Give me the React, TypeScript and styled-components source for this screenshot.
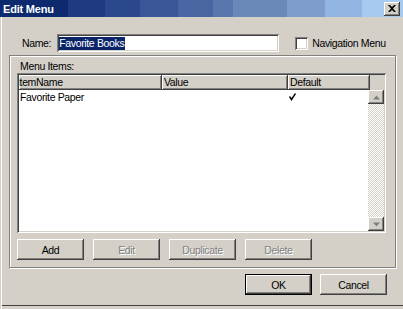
import * as React from 'react'
import styled, { createGlobalStyle } from 'styled-components'

const GlobalStyle = createGlobalStyle`
    html, body {
        margin: 0;
        padding: 0;
        background: #d4d0c8;
    }
    body {
        font: 10.5px 'Liberation Sans', Arial, sans-serif;
        letter-spacing: -0.35px;
        color: #000;
    }
`

const face = '#d4d0c8'
const shadow = '#808080'
const darkShadow = '#404040'

// Raised bevel used by buttons and header cells
const raised = `
    box-shadow: inset -1px -1px 0 ${darkShadow}, inset 1px 1px 0 #fff,
        inset -2px -2px 0 ${shadow}, inset 2px 2px 0 ${face};
`

// Sunken bevel used by edit fields, checkbox and list
const sunken = `
    box-shadow: inset 1px 1px 0 ${shadow}, inset -1px -1px 0 #fff,
        inset 2px 2px 0 ${darkShadow}, inset -2px -2px 0 ${face};
`

const Window = styled.div`
    width: 403px;
    height: 309px;
    display: flex;
    flex-direction: column;
    background: ${face};
    overflow: hidden;
`

const TitleBar = styled.div`
    height: 17px;
    flex-shrink: 0;
    display: flex;
    align-items: center;
    padding: 0 3px 0 3px;
    background: linear-gradient(
        to right,
        #0e2a6e 0 68px,
        #1f3a80 68px 105px,
        #2c488c 105px 140px,
        #3a5696 140px 178px,
        #4a66a2 178px 213px,
        #5a76ae 213px 233px,
        #6a88b8 233px 287px,
        #7e9ccc 287px 325px,
        #92b4e0 325px 362px,
        #a6caf0 362px
    );
`

const Title = styled.div`
    flex: 1;
    color: #fff;
    font-weight: bold;
    font-size: 11px;
    letter-spacing: -0.2px;
`

const CloseBtn = styled.div`
    width: 16px;
    height: 14px;
    background: ${face};
    ${raised}
    display: flex;
    align-items: center;
    justify-content: center;
`

const Body = styled.div`
    flex: 1;
    display: flex;
    flex-direction: column;
    padding: 0 7px 0 9px;
    box-shadow: inset 1px 0 0 ${face}, inset 2px 0 0 #fff,
        inset 0 -3px 0 ${face}, inset 0 -4px 0 ${darkShadow};
`

const NameRow = styled.div`
    display: flex;
    align-items: center;
    height: 18px;
    margin-top: 17px;
    padding-left: 13px;
`

const Label = styled.span`
    white-space: nowrap;
`

const TextField = styled.div`
    width: 222px;
    height: 18px;
    margin-left: 6px;
    background: #fff;
    ${sunken}
    display: flex;
    align-items: center;
    padding: 0 2px;
    box-sizing: border-box;
`

const Selected = styled.span`
    background: #0a246a;
    color: #fff;
    line-height: 13px;
    padding-right: 1px;
`

const CheckBox = styled.div`
    width: 13px;
    height: 13px;
    margin-left: 16px;
    margin-right: 4px;
    background: #fff;
    ${sunken}
`

const GroupBox = styled.div`
    margin-top: 3px;
    height: 208px;
    border: 1px solid ${shadow};
    box-shadow: inset 1px 1px 0 #fff, 1px 1px 0 #fff;
    display: flex;
    flex-direction: column;
    padding: 3px 9px 0 7px;
`

const GroupLabel = styled.div`
    line-height: 14px;
    padding-left: 3px;
`

const List = styled.div`
    height: 160px;
    width: 369px;
    box-sizing: border-box;
    padding: 2px;
    background: #fff;
    ${sunken}
    display: flex;
    flex-direction: column;
`

const HeaderRow = styled.div`
    display: flex;
    height: 15px;
    flex-shrink: 0;
    background: ${face};
`

const HeaderCell = styled.div<{ $w: number }>`
    width: ${p => p.$w}px;
    flex-shrink: 0;
    box-sizing: border-box;
    padding-left: 2px;
    line-height: 15px;
    overflow: hidden;
    white-space: nowrap;
    box-shadow: inset -1px -1px 0 ${darkShadow}, inset 1px 1px 0 #fff,
        inset -2px -2px 0 ${shadow};
`

// the first header label is partly scrolled out of view in the original
const Clip = styled.span`
    display: inline-block;
    margin-left: -4px;
`

const ListBody = styled.div`
    flex: 1;
    display: flex;
    min-height: 0;
`

const Rows = styled.div`
    flex: 1;
    overflow: hidden;
`

const Row = styled.div`
    display: flex;
    height: 13px;
    align-items: center;
`

const Cell = styled.div<{ $w: number }>`
    width: ${p => p.$w}px;
    flex-shrink: 0;
    overflow: hidden;
    white-space: nowrap;
    padding-left: 1px;
    box-sizing: border-box;
`

const ScrollBar = styled.div`
    width: 16px;
    display: flex;
    flex-direction: column;
    background: repeating-conic-gradient(${face} 0 25%, #fff 0 50%) 0 0 / 2px 2px;
`

const ScrollBtn = styled.div`
    height: 14px;
    background: ${face};
    ${raised}
    display: flex;
    align-items: center;
    justify-content: center;
`

const Track = styled.div`
    flex: 1;
`

const ButtonRow = styled.div`
    display: flex;
    gap: 9px;
    margin-top: 6px;
`

const Button = styled.div<{ $disabled?: boolean; $default?: boolean }>`
    width: 67px;
    height: 21px;
    box-sizing: border-box;
    display: flex;
    align-items: center;
    justify-content: center;
    background: ${face};
    ${raised}
    color: ${p => (p.$disabled ? shadow : '#000')};
    text-shadow: ${p => (p.$disabled ? '1px 1px 0 #fff' : 'none')};
    border: ${p => (p.$default ? '1px solid #000' : 'none')};
`

const Footer = styled.div`
    display: flex;
    justify-content: flex-end;
    gap: 8px;
    margin-top: 6px;
    padding-right: 9px;
`

const CloseIcon = () => (
    <svg width="8" height="7" viewBox="0 0 8 7">
        <path d="M0 0h2l2 2 2-2h2L5 3.5 8 7H6L4 5 2 7H0l3-3.5z" fill="#000" />
    </svg>
)

const Arrow = ({ up }: { up?: boolean }) => (
    <svg width="7" height="5" viewBox="0 0 7 5">
        <path
            d={up ? 'M3.5 0.5 7 4.5H0z' : 'M0 0.5h7L3.5 4.5z'}
            fill={shadow}
        />
    </svg>
)

const Check = () => (
    <svg width="7" height="8" viewBox="0 0 7 8">
        <path d="M0 4l1-1 1.5 2L6 0l1 1-4.5 7z" fill="#000" />
    </svg>
)

const cols = [143, 126, 82]

export default function App() {
    return (
        <Window>
            <GlobalStyle />
            <TitleBar>
                <Title>Edit Menu</Title>
                <CloseBtn>
                    <CloseIcon />
                </CloseBtn>
            </TitleBar>
            <Body>
                <NameRow>
                    <Label>Name:</Label>
                    <TextField>
                        <Selected>Favorite Books</Selected>
                    </TextField>
                    <CheckBox />
                    <Label>Navigation Menu</Label>
                </NameRow>

                <GroupBox>
                    <GroupLabel>Menu Items:</GroupLabel>
                    <List>
                        <HeaderRow>
                            <HeaderCell $w={cols[0]}>
                                <Clip>ItemName</Clip>
                            </HeaderCell>
                            <HeaderCell $w={cols[1]}>Value</HeaderCell>
                            <HeaderCell $w={cols[2]}>Default</HeaderCell>
                        </HeaderRow>
                        <ListBody>
                            <Rows>
                                <Row>
                                    <Cell $w={cols[0]}>Favorite Paper</Cell>
                                    <Cell $w={cols[1]} />
                                    <Cell $w={cols[2]}>
                                        <Check />
                                    </Cell>
                                </Row>
                            </Rows>
                            <ScrollBar>
                                <ScrollBtn>
                                    <Arrow up />
                                </ScrollBtn>
                                <Track />
                                <ScrollBtn>
                                    <Arrow />
                                </ScrollBtn>
                            </ScrollBar>
                        </ListBody>
                    </List>
                    <ButtonRow>
                        <Button>Add</Button>
                        <Button $disabled>Edit</Button>
                        <Button $disabled>Duplicate</Button>
                        <Button $disabled>Delete</Button>
                    </ButtonRow>
                </GroupBox>

                <Footer>
                    <Button $default>OK</Button>
                    <Button>Cancel</Button>
                </Footer>
            </Body>
        </Window>
    )
}
